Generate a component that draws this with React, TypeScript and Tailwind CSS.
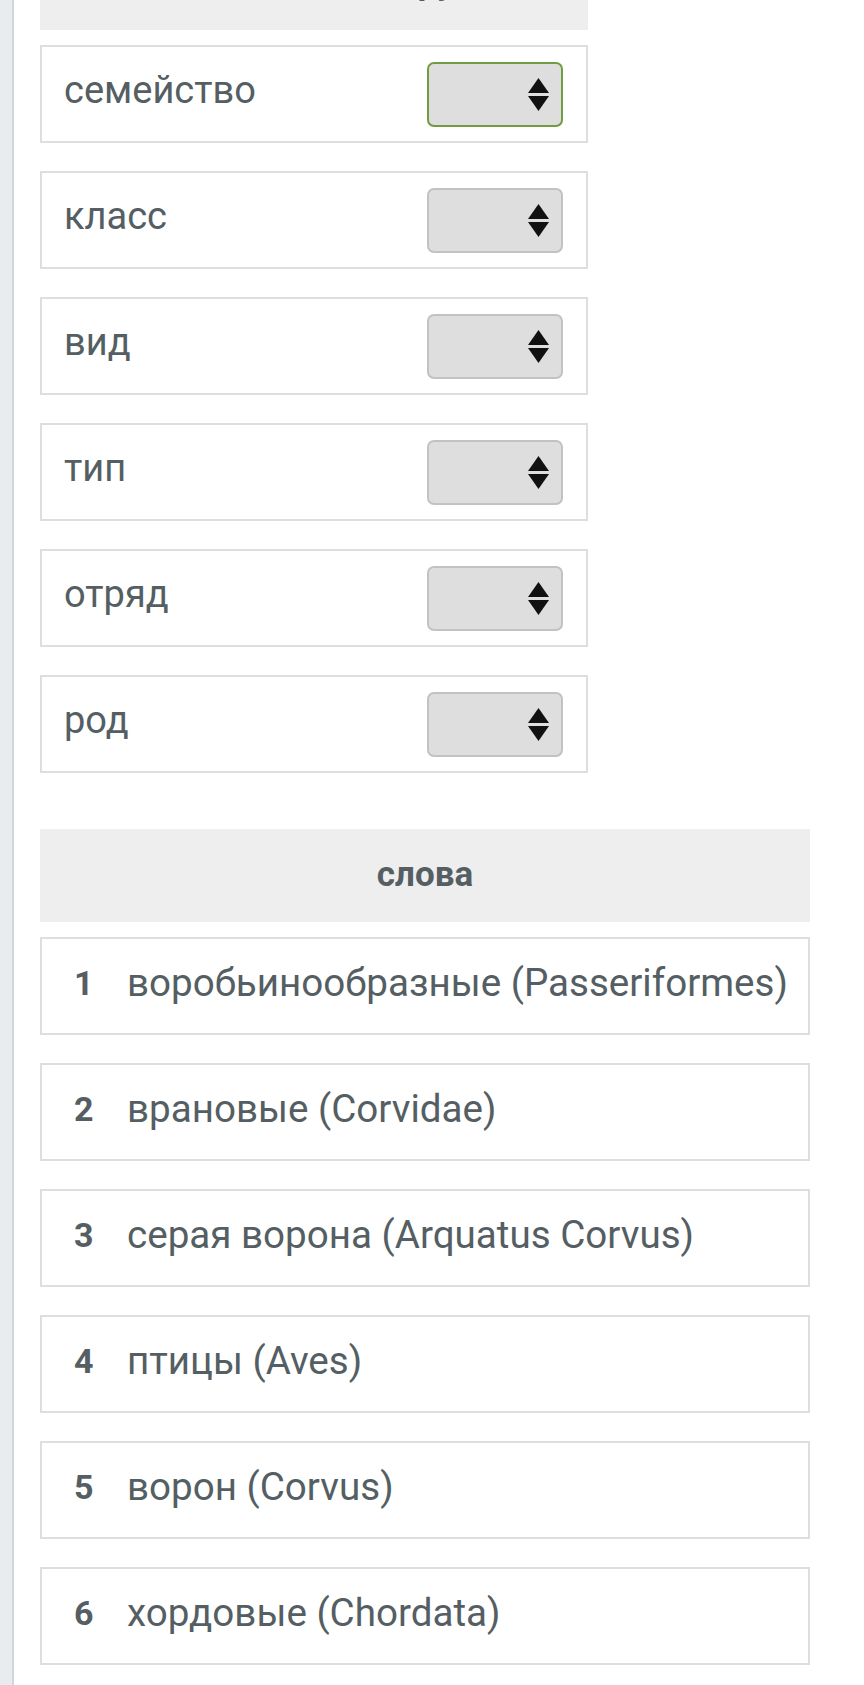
import React from 'react';

const CATEGORIES = ['семейство', 'класс', 'вид', 'тип', 'отряд', 'род'];

const WORDS = [
  'воробьинообразные (Passeriformes)',
  'врановые (Corvidae)',
  'серая ворона (Arquatus Corvus)',
  'птицы (Aves)',
  'ворон (Corvus)',
  'хордовые (Chordata)',
];

function SelectArrows() {
  return (
    <svg width="21" height="33" viewBox="0 0 21 33" className="block">
      <polygon points="10.5,0 21,15 0,15" fill="#111" />
      <polygon points="0,18 21,18 10.5,33" fill="#111" />
    </svg>
  );
}

function FakeSelect({ focused }: { focused?: boolean }) {
  return (
    <div
      className={
        focused
          ? 'w-[136px] h-[65px] rounded-[7px] bg-[#dedede] border-2 border-[#6f9d42] flex items-center justify-end pr-[12px]'
          : 'w-[136px] h-[65px] rounded-[7px] bg-[#dedede] border-2 border-[#c2c2c2] flex items-center justify-end pr-[12px]'
      }
    >
      <SelectArrows />
    </div>
  );
}

export default function App() {
  return (
    <div
      className="min-h-[1685px] bg-white flex overflow-hidden text-[#545e63]"
      style={{ fontFamily: 'Roboto, "Noto Sans", sans-serif' }}
    >
      {/* left rail */}
      <div className="w-[14px] shrink-0 bg-[#e9ecee] border-r-2 border-[#d3d7d9]" />

      <div className="flex-1 pl-[26px] pr-[54px]">
        {/* categories */}
        <div className="w-[548px] -mt-[63px]">
          <div className="h-[93px] bg-[#eeeeee] flex items-center justify-center font-bold text-[35px]">
            систематические группы
          </div>
          <div className="flex flex-col gap-[28px] mt-[15px]">
            {CATEGORIES.map((c, i) => (
              <div
                key={c}
                className="h-[98px] border-2 border-[#dedede] flex items-center justify-between pl-[22px] pr-[23px]"
              >
                <span className="text-[38px] leading-none pb-[8px]">{c}</span>
                <FakeSelect focused={i === 0} />
              </div>
            ))}
          </div>
        </div>

        {/* words */}
        <div className="w-[770px] mt-[56px]">
          <div className="h-[93px] bg-[#eeeeee] flex items-center justify-center font-bold text-[35px]">
            слова
          </div>
          <div className="flex flex-col gap-[28px] mt-[15px]">
            {WORDS.map((w, i) => (
              <div
                key={w}
                className="h-[98px] border-2 border-[#dedede] flex items-center pl-[32px] pb-[6px]"
              >
                <span className="w-[53px] font-bold text-[34px] leading-none">{i + 1}</span>
                <span className="text-[38.6px] leading-none whitespace-nowrap">{w}</span>
              </div>
            ))}
          </div>
        </div>
      </div>
    </div>
  );
}
